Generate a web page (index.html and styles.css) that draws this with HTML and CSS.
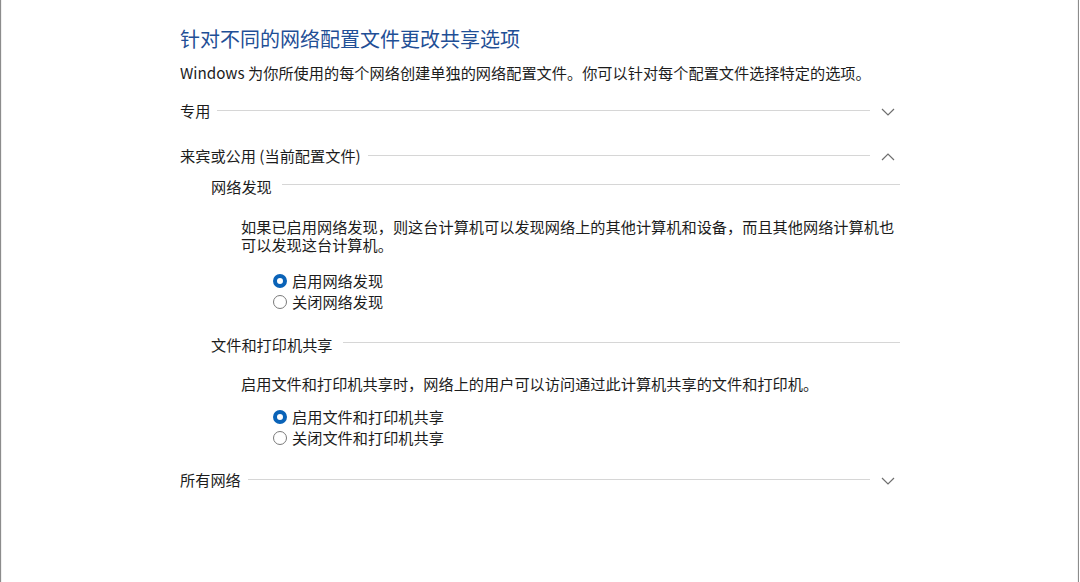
FILE: index.html
```html
<!DOCTYPE html>
<html lang="zh-CN">
<head>
<meta charset="utf-8">
<title>高级共享设置</title>
<link rel="stylesheet" href="styles.css">
</head>
<body>
<div class="frame">
  <div class="content">
    <h1 class="title">针对不同的网络配置文件更改共享选项</h1>
    <p class="intro">Windows 为你所使用的每个网络创建单独的网络配置文件。你可以针对每个配置文件选择特定的选项。</p>

    <div class="group-head first">
      <span class="label">专用</span>
      <span class="rule"></span>
      <span class="chev"><svg width="14" height="8" viewBox="0 0 14 8"><polyline points="1,1 7,7 13,1" fill="none" stroke="#6e6e6e" stroke-width="1.2"/></svg></span>
    </div>

    <div class="group-head open">
      <span class="label">来宾或公用 (当前配置文件)</span>
      <span class="rule"></span>
      <span class="chev"><svg width="14" height="8" viewBox="0 0 14 8"><polyline points="1,7 7,1 13,7" fill="none" stroke="#6e6e6e" stroke-width="1.2"/></svg></span>
    </div>

    <div class="sub">
      <div class="sub-head">
        <span class="label">网络发现</span>
        <span class="rule"></span>
      </div>
      <p class="desc wrap">如果已启用网络发现，则这台计算机可以发现网络上的其他计算机和设备，而且其他网络计算机也可以发现这台计算机。</p>
      <div class="options">
        <div class="opt"><span class="radio on"></span><span>启用网络发现</span></div>
        <div class="opt"><span class="radio"></span><span>关闭网络发现</span></div>
      </div>
    </div>

    <div class="sub second">
      <div class="sub-head">
        <span class="label">文件和打印机共享</span>
        <span class="rule"></span>
      </div>
      <p class="desc">启用文件和打印机共享时，网络上的用户可以访问通过此计算机共享的文件和打印机。</p>
      <div class="options tight">
        <div class="opt"><span class="radio on"></span><span>启用文件和打印机共享</span></div>
        <div class="opt"><span class="radio"></span><span>关闭文件和打印机共享</span></div>
      </div>
    </div>

    <div class="group-head last">
      <span class="label">所有网络</span>
      <span class="rule"></span>
      <span class="chev"><svg width="14" height="8" viewBox="0 0 14 8"><polyline points="1,1 7,7 13,1" fill="none" stroke="#6e6e6e" stroke-width="1.2"/></svg></span>
    </div>
  </div>
</div>
</body>
</html>
```

FILE: styles.css
```css
html, body {
  margin: 0;
  padding: 0;
  background: #ffffff;
}

body {
  font-family: "Microsoft YaHei", "Noto Sans CJK SC", "Noto Sans", sans-serif;
  color: #1c1c1c;
  font-size: 15.2px;
}

.frame {
  width: 1077px;
  height: 582px;
  border-left: 1px solid #8c8c8c;
  border-right: 1px solid #8c8c8c;
  box-shadow: inset 4px 0 0 -3px #f0f0f0, inset -3px 0 0 -2px #f3f3f3;
  box-sizing: content-box;
  overflow: hidden;
}

.content {
  width: 720px;
  margin-left: 179px;
  padding-top: 25px;
}

.title {
  margin: 0;
  font-size: 20px;
  font-weight: normal;
  line-height: 28px;
  color: #1f4f96;
}

.intro {
  margin: 9px 0 0 0;
  line-height: 20px;
  white-space: nowrap;
}

.group-head {
  display: flex;
  align-items: center;
  height: 20px;
  line-height: 20px;
}

.group-head.first { margin-top: 18px; }
.group-head.open { margin-top: 25px; }
.group-head.last { margin-top: 21px; }

.group-head .rule {
  flex: 1;
  height: 0;
  border-top: 1px solid #d6d6d6;
  margin-left: 7px;
  margin-top: 1px;
}

.chev {
  width: 30px;
  display: flex;
  justify-content: center;
  padding-left: 6px;
  box-sizing: border-box;
  margin-top: 3px;
}

.chev svg { display: block; }

.sub {
  padding-left: 31px;
  margin-top: 11px;
}

.sub.second { margin-top: 22px; }

.sub-head {
  display: flex;
  align-items: center;
  height: 20px;
  line-height: 20px;
}

.sub-head .rule {
  flex: 1;
  height: 0;
  border-top: 1px solid #d6d6d6;
  margin-left: 10px;
  margin-top: -3px;
}

.desc {
  margin: 21px 0 0 30px;
  line-height: 18px;
  white-space: nowrap;
}

.desc.wrap {
  white-space: normal;
  width: 668px;
}

.second .desc { margin-top: 20px; }

.options {
  margin: 17px 0 0 62px;
}

.options.tight { margin-top: 14px; }

.opt {
  display: flex;
  align-items: center;
  height: 21px;
  line-height: 21px;
}

.radio {
  width: 14px;
  height: 14px;
  box-sizing: border-box;
  border-radius: 50%;
  border: 1px solid #7a7a7a;
  background: #ffffff;
  margin-right: 5px;
  flex: none;
}

.radio.on {
  border: 4.5px solid #0a63b8;
  background: #ffffff;
}
```
